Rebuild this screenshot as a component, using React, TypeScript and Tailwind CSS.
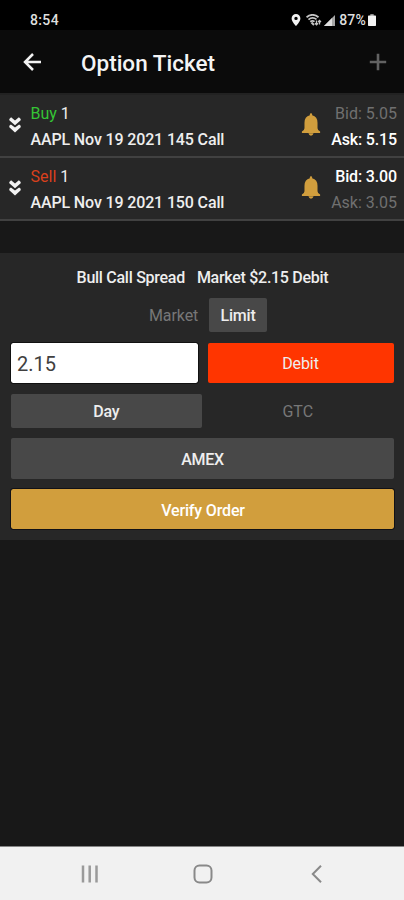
import type { ReactNode } from "react";

function StatusBar() {
  return (
    <div className="flex h-[30px] items-center bg-black pt-[10px] pr-7 pl-[30px] text-[#dedede]">
      <span className="text-[14px] leading-5 font-medium tracking-[0.35px]">8:54</span>
      <div className="ml-auto flex items-center">
        <svg className="mr-[5px] h-3 w-[10px]" viewBox="0 0 9 12" fill="#f2f2f2">
          <path
            fillRule="evenodd"
            d="M4.5 0A4.4 4.4 0 0 0 .1 4.4C.1 7.500 4.500 12 4.500 12s4.400-4.500 4.400-7.600A4.400 4.400 0 0 0 4.500 0Zm0 2.700a1.700 1.700 0 1 1 0 3.400 1.700 1.700 0 0 1 0-3.400Z"
          />
        </svg>
        <svg className="mr-[2px] h-3 w-4" viewBox="0 0 16 12" fill="none" stroke="#c4c4c4">
          <path d="M.5 3.200Q6.500-1.500 12.500 3.200M2.500 5.600Q6.500 2.300 10.500 5.400M4.300 7.700Q6.500 6 8.500 7.600" strokeWidth="1.800" />
          <path d="M5.500 8.500 8 11" strokeWidth="2" />
          <path d="M10.500 6.500v4.200M9 9.200l1.500 1.600 1.500-1.600M13.500 10.500v-4M12.100 8l1.400-1.500L15 8" strokeWidth="1.300" />
        </svg>
        <svg className="mr-1 h-[11px] w-[11px]" viewBox="0 0 11 11">
          <path d="M11 0v11H0Z" fill="#a6a6a6" />
          <path d="M8 3v8H0Z" fill="#dedede" />
        </svg>
        <span className="text-[14px] leading-5 font-medium tracking-[0.2px]">87%</span>
        <svg className="ml-[2px] h-3 w-2" viewBox="0 0 8 12">
          <path d="M2.300 0h3.400v2H2.300Z" fill="#8d8d8d" />
          <rect y="1.500" width="8" height="10.500" rx=".7" fill="#f2f2f2" />
        </svg>
      </div>
    </div>
  );
}

function Header() {
  return (
    <header className="flex h-[63px] items-center bg-[#0b0b0b] pr-[17px] pl-[23px]">
      <svg className="h-[18px] w-[19px]" viewBox="0 0 19 18" fill="none" stroke="#f2f2f2" strokeWidth="2.500">
        <path d="M18 9H2M10 1 2 9l8 8" />
      </svg>
      <h1 className="ml-[39px] pt-[2px] text-[22.500px] leading-7 font-medium text-[#f4f4f4]">Option Ticket</h1>
      <svg className="ml-auto h-[18px] w-[18px]" viewBox="0 0 18 18" stroke="#626262" strokeWidth="2.600">
        <path d="M9 .800v16.400M.800 9h16.400" />
      </svg>
    </header>
  );
}

function Chevrons() {
  return (
    <svg className="-mt-[2px] h-4 w-3" viewBox="0 0 12 16" fill="#f2f2f2">
      <path d="M.300 1.900 2.100.200 6 3.600 9.900.200l1.800 1.700v1.300L6 8.300.300 3.200Z" />
      <path d="M.300 8.700 1.900 7.400 6 10.500l4.100-3.100 1.600 1.300v1.600L6 15.500.300 10.300Z" />
    </svg>
  );
}

function Bell() {
  return (
    <svg className="-mt-[2px] h-[23px] w-[20px]" viewBox="0 0 20 24" fill="#d19e3d">
      <path d="M8.800 2.400V1.300Q8.800.300 10 .300t1.200 1v1.100q5.600 1.600 5.600 7.700v5.800q0 1.900 2.700 3.400v1.500H.500v-1.500q2.700-1.500 2.700-3.400v-5.800q0-6.100 5.600-7.700Z" />
      <path d="M7.300 21.200h5.400Q12 23.800 10 23.800t-2.700-2.600Z" />
    </svg>
  );
}

type LegProps = {
  side: string;
  sideClass: string;
  contract: string;
  bid: string;
  ask: string;
  bidClass: string;
  askClass: string;
};

function Leg({ side, sideClass, contract, bid, ask, bidClass, askClass }: LegProps) {
  return (
    <div className="flex h-[63px] items-center border-b-2 border-[#414141] bg-[#272727] pr-[7px] pl-[9px] text-[16px] leading-[26px] text-[#eeeeee]">
      <Chevrons />
      <div className="ml-[9.500px] pt-[2px]">
        <div>
          <span className={sideClass}>{side}</span> 1
        </div>
        <div className="font-medium tracking-[-0.14px] whitespace-nowrap">{contract}</div>
      </div>
      <div className="ml-auto flex items-center">
        <Bell />
        <div className="w-[76px] pt-[2px] text-right">
          <div className={bidClass}>Bid: {bid}</div>
          <div className={askClass}>Ask: {ask}</div>
        </div>
      </div>
    </div>
  );
}

function Button({ className, children }: { className: string; children: ReactNode }) {
  return (
    <button type="button" className={`flex items-center justify-center rounded-[2px] ${className}`}>
      {children}
    </button>
  );
}

function OrderForm() {
  return (
    <section className="h-[287px] bg-[#272727] px-[10.500px] pt-[13px] text-[16px] text-[#eeeeee]">
      <div className="flex h-6 justify-center gap-3 pl-[1px] leading-6 font-medium tracking-[-0.28px] whitespace-nowrap">
        <span>Bull Call Spread</span>
        <span>Market $2.15 Debit</span>
      </div>
      <div className="mt-[8px] flex h-[34px] items-center pl-[138.500px]">
        <span className="w-[60px] pt-[2px] tracking-[-0.1px] text-[#777777]">Market</span>
        <Button className="h-[34px] w-[58px] bg-[#484848] pt-[2px] font-medium tracking-[-0.2px]">Limit</Button>
      </div>
      <div className="mt-[11px] flex h-10 justify-between">
        <input
          aria-label="Price"
          defaultValue="2.15"
          className="h-10 w-[187px] rounded-[2px] bg-white pt-[2px] pl-[6.500px] text-[20px] text-[#404040] outline-1 outline-[#111111]"
        />
        <Button className="h-10 w-[186px] bg-[#ff3500] pt-[2px] tracking-[-0.1px]">Debit</Button>
      </div>
      <div className="mt-[11px] flex h-[34px]">
        <Button className="w-1/2 bg-[#484848] pt-[2px] font-medium tracking-[-0.2px]">Day</Button>
        <Button className="w-1/2 pt-[2px] text-[#777777]">GTC</Button>
      </div>
      <Button className="mt-[10px] h-[41px] w-full bg-[#484848] pt-[2px] pl-[1px] font-medium tracking-[-0.3px]">AMEX</Button>
      <Button className="mt-[10px] h-10 w-full bg-[#d19e3d] pt-[3px] pl-[2px] font-medium tracking-[-0.15px] text-white outline-1 outline-[#111116]">
        Verify Order
      </Button>
    </section>
  );
}

function NavigationBar() {
  return (
    <nav className="mt-auto flex h-[54px] items-center border-t border-[#858585] bg-[#f1f1f1] pl-20">
      <svg className="h-[18px] w-[18px]" viewBox="0 0 18 18" fill="none" stroke="#9a9a9a" strokeWidth="2.500">
        <path d="M3 .500v17M9.700.500v17M16.500.500v17" />
      </svg>
      <svg className="ml-[95px] h-5 w-5" viewBox="0 0 20 20" fill="none" stroke="#898989" strokeWidth="2">
        <rect x="1.500" y="1.500" width="17" height="17" rx="5" />
      </svg>
      <svg className="ml-[98px] h-[18px] w-[11px]" viewBox="0 0 11 18" fill="none" stroke="#898989" strokeWidth="2">
        <path d="M10 .800 1.800 9 10 17.200" />
      </svg>
    </nav>
  );
}

export default function App() {
  return (
    <main className="flex h-[900px] w-[404px] flex-col overflow-hidden bg-[#181818] font-[Roboto,'Liberation_Sans',sans-serif]">
      <StatusBar />
      <Header />
      <div className="bg-[#222222] pt-[2px]">
        <Leg
          side="Buy"
          sideClass="text-[#35c435]"
          contract="AAPL Nov 19 2021 145 Call"
          bid="5.05"
          ask="5.15"
          bidClass="text-[#707070]"
          askClass="font-medium tracking-[-0.15px] text-white"
        />
        <Leg
          side="Sell"
          sideClass="text-[#d9401c]"
          contract="AAPL Nov 19 2021 150 Call"
          bid="3.00"
          ask="3.05"
          bidClass="font-medium tracking-[-0.15px] text-white"
          askClass="text-[#707070]"
        />
      </div>
      <div className="h-8" />
      <OrderForm />
      <NavigationBar />
    </main>
  );
}
